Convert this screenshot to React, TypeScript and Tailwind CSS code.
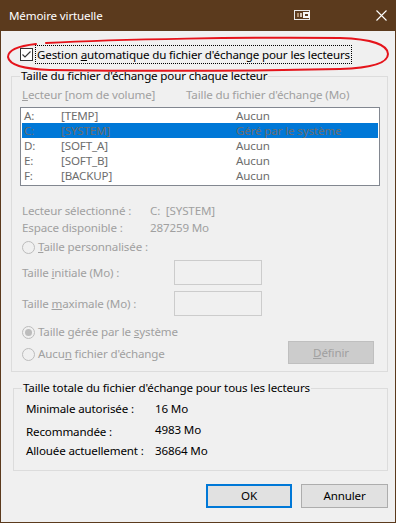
const FONT = '"Noto Sans", "Open Sans", sans-serif';

const drives = [
  { letter: 'A:', name: '[TEMP]', size: 'Aucun' },
  { letter: 'C:', name: '[SYSTEM]', size: 'Géré par le système', selected: true },
  { letter: 'D:', name: '[SOFT_A]', size: 'Aucun' },
  { letter: 'E:', name: '[SOFT_B]', size: 'Aucun' },
  { letter: 'F:', name: '[BACKUP]', size: 'Aucun' },
];

function Radio({ checked = false }: { checked?: boolean }) {
  return (
    <span className="flex items-center justify-center w-[13px] h-[13px] rounded-full border border-[#bcbcbc] bg-[#f0f0f0] shrink-0">
      {checked && <span className="w-[7px] h-[7px] rounded-full bg-[#bcbcbc]" />}
    </span>
  );
}

function Annotation() {
  // hand drawn red circle around the checkbox
  return (
    <svg className="absolute left-0 top-0 pointer-events-none" width="396" height="90" viewBox="0 0 396 90">
      <path
        d="M46 43 C120 39 250 37 340 38 C372 39 388 45 388 54 C388 63 372 68 340 69 C250 71 120 71 50 70 C22 69 9 64 8 57 C8 50 18 46 36 44"
        fill="none"
        stroke="#e5141b"
        strokeWidth="2"
        strokeLinecap="round"
      />
    </svg>
  );
}

export default function App() {
  return (
    <div
      className="relative w-[396px] h-[523px] bg-[#5b3a1d] flex flex-col text-[11.6px] tracking-[-0.15px] leading-[16px] text-black select-none"
      style={{ fontFamily: FONT }}
    >
      {/* title bar */}
      <div className="h-[31px] flex items-center text-white shrink-0">
        <span className="ml-[9px]">Mémoire virtuelle</span>
        <svg className="ml-auto" width="17" height="11" viewBox="0 0 17 11">
          <rect x="0.5" y="0.5" width="15" height="9" fill="none" stroke="#e8e8e8" />
          <rect x="3" y="3" width="2" height="4" fill="#b09070" />
          <rect x="6" y="3" width="2" height="4" fill="#d8c8b8" />
          <rect x="9" y="2" width="7" height="6" fill="#f4f4f4" />
          <rect x="11" y="4" width="3" height="2" fill="#5b3a1d" />
        </svg>
        <svg className="ml-[65px] mr-[9px]" width="11" height="11" viewBox="0 0 11 11">
          <path d="M0.5 0.5 L10.5 10.5 M10.5 0.5 L0.5 10.5" stroke="#ffffff" strokeWidth="1.1" />
        </svg>
      </div>

      {/* body */}
      <div className="flex-1 mx-[1px] mb-[1px] bg-[#f0f0f0] flex flex-col">
        <div className="mt-[14px] ml-[19px] flex items-center h-[19px]">
          <span className="w-[13px] h-[13px] border border-[#333333] bg-white flex items-center justify-center">
            <svg width="11" height="11" viewBox="0 0 11 11">
              <path d="M1.5 5.5 L4 8 L9.5 2.5" fill="none" stroke="#333333" strokeWidth="1.1" />
            </svg>
          </span>
          <span className="ml-[2px] pl-[2px] pr-[2px] h-[19px] leading-[19px] block outline-1 outline-dotted outline-black -outline-offset-1">
            Gestion <u>a</u>utomatique du fichier d'échange pour les lecteurs
          </span>
        </div>

        <fieldset className="mt-[4px] ml-[10px] w-[377px] border border-[#dcdcdc] pb-[7px]">
          <legend className="ml-[8px] px-[1px] leading-[16px]">Taille du fichier d'échange pour chaque lecteur</legend>
          <div className="mt-[3px] pl-[10px] flex text-[#a0a0a0]">
            <span className="w-[164px]"><u>L</u>ecteur [nom de volume]</span>
            <span>Taille du fichier d'échange (Mo)</span>
          </div>
          <div className="mt-[4px] ml-[8px] w-[360px] h-[79px] border border-[#828790] bg-white">
            {drives.map((d) => (
              <div
                key={d.letter}
                className={`mx-[1px] h-[15px] leading-[15px] flex items-center text-[#6d6d6d] ${d.selected ? 'bg-[#0078d7]' : ''}`}
              >
                <span className="pl-[2px] w-[39px]">{d.letter}</span>
                <span className="w-[175px]">{d.name}</span>
                <span>{d.size}</span>
              </div>
            ))}
          </div>

          <div className="mt-[17px] pl-[10px] flex text-[#a0a0a0] h-[17px]">
            <span className="w-[128px]">Lecteur sélectionné :</span>
            <span>C:&nbsp; [SYSTEM]</span>
          </div>
          <div className="pl-[10px] flex text-[#a0a0a0] h-[16px]">
            <span className="w-[128px]">Espace disponible :</span>
            <span>287259 Mo</span>
          </div>
          <div className="mt-[3px] pl-[10px] flex items-center gap-[3px] h-[16px] text-[#a0a0a0]">
            <Radio />
            <span><u>T</u>aille personnalisée :</span>
          </div>

          <div className="mt-[5px] pl-[10px] flex items-center text-[#a0a0a0]">
            <span className="w-[152px]">Taille <u>i</u>nitiale (Mo) :</span>
            <span className="w-[88px] h-[25px] border border-[#cccccc] bg-[#f0f0f0]" />
          </div>
          <div className="mt-[6px] pl-[10px] flex items-center text-[#a0a0a0]">
            <span className="w-[152px]">Taille <u>m</u>aximale (Mo) :</span>
            <span className="w-[88px] h-[25px] border border-[#cccccc] bg-[#f0f0f0]" />
          </div>

          <div className="mt-[8px] pl-[10px] flex items-center gap-[3px] h-[16px] text-[#a0a0a0]">
            <Radio checked />
            <span>Taille gérée par le <u>s</u>ystème</span>
          </div>
          <div className="mt-[1px] pl-[10px] flex items-start">
            <div className="mt-[5px] flex items-center gap-[3px] h-[16px] text-[#a0a0a0]">
              <Radio />
              <span>Aucu<u>n</u> fichier d'échange</span>
            </div>
            <button className="ml-auto mr-[13px] w-[86px] h-[23px] border border-[#bfbfbf] bg-[#cccccc] text-[#a0a0a0] flex items-center justify-center">
              <span><u>D</u>éfinir</span>
            </button>
          </div>
        </fieldset>

        <fieldset className="mt-[8px] ml-[12px] w-[375px] border border-[#dcdcdc] pb-[11px]">
          <legend className="ml-[8px] px-[1px] leading-[16px]">Taille totale du fichier d'échange pour tous les lecteurs</legend>
          <div className="mt-[5px] pl-[12px] flex h-[16px]">
            <span className="w-[129px]">Minimale autorisée :</span>
            <span>16 Mo</span>
          </div>
          <div className="mt-[7px] pl-[12px] flex h-[16px]">
            <span className="w-[129px]">Recommandée :</span>
            <span className="-mt-[2px]">4983 Mo</span>
          </div>
          <div className="mt-[3px] pl-[12px] flex h-[16px]">
            <span className="w-[129px]">Allouée actuellement :</span>
            <span>36864 Mo</span>
          </div>
        </fieldset>

        <div className="mt-[13px] pr-[7px] flex justify-end gap-[9px]">
          <button className="w-[86px] h-[24px] border-2 border-[#0078d7] bg-[#e1e1e1] flex items-center justify-center">
            OK
          </button>
          <button className="w-[87px] h-[24px] border border-[#adadad] bg-[#e1e1e1] flex items-center justify-center">
            Annuler
          </button>
        </div>
      </div>

      <Annotation />
    </div>
  );
}
